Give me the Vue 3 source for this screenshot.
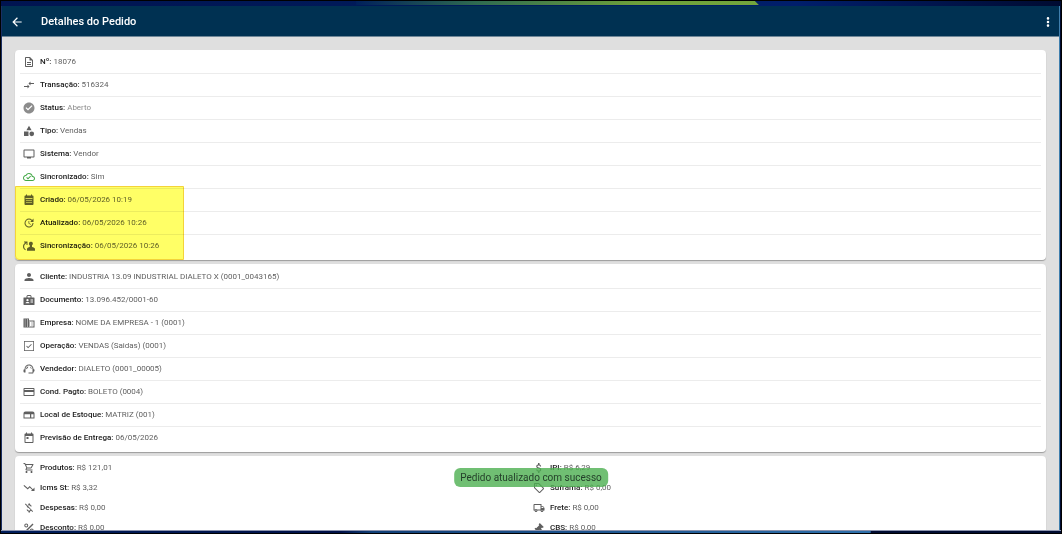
<script setup>
import { h } from 'vue'

const icons = {
  back: 'M20 11H7.83l5.59-5.59L12 4l-8 8 8 8 1.41-1.41L7.83 13H20z',
  more: 'M12 8a2.2 2.2 0 1 0 0-4.400 2.200 2.200 0 0 0 0 4.400zm0 6.200a2.200 2.200 0 1 0 0-4.400 2.200 2.200 0 0 0 0 4.400zm0 6.200a2.200 2.200 0 1 0 0-4.400 2.200 2.200 0 0 0 0 4.400z',
  document: 'M8 16h8v2H8zm0-4h8v2H8zm6-10H6c-1.100 0-2 .9-2 2v16c0 1.100.89 2 1.990 2H18c1.100 0 2-.9 2-2V8l-6-6zm4 18H6V4h7v5h5v11z',
  transfer: 'M9.010 14H2v2h7.010v3L13 15l-3.990-4v3zm5.980-1v-3H22V8h-7.010V5L11 9l3.990 4z',
  check: 'M12 1C5.930 1 1 5.930 1 12s4.930 11 11 11 11-4.930 11-11S18.070 1 12 1zm-2 16l-5-5 1.700-1.700L10 13.600l7.300-7.300L19 8l-9 9z',
  category: 'M12 1.500L6.800 10.500h10.400zM2 13h9v9H2zM17.500 13a4.700 4.700 0 1 0 0 9.400 4.700 4.700 0 0 0 0-9.400z',
  monitor: 'M21 3H3c-1.100 0-2 .9-2 2v12c0 1.100.9 2 2 2h5v2h8v-2h5c1.100 0 2-.9 2-2V5c0-1.100-.9-2-2-2zm0 14H3V5h18v12z',
  cloud: 'M19.350 10.040C18.670 6.590 15.640 4 12 4 9.110 4 6.600 5.640 5.350 8.040 2.340 8.360 0 10.910 0 14c0 3.310 2.690 6 6 6h13c2.760 0 5-2.240 5-5 0-2.640-2.050-4.780-4.650-4.960zM19 18H6c-2.210 0-4-1.790-4-4 0-2.050 1.530-3.760 3.560-3.970l1.070-.11.5-.95C8.080 7.140 9.940 6 12 6c2.620 0 4.880 1.860 5.390 4.430l.3 1.500 1.530.11c1.560.1 2.780 1.410 2.780 2.960 0 1.650-1.350 3-3 3zm-9-3.820l-2.090-2.090L6.500 13.500 10 17l6.010-6.010-1.410-1.410z',
  calendar: 'M19 3h-1V1h-2v2H8V1H6v2H5c-1.100 0-2 .9-2 2v15c0 1.100.9 2 2 2h14c1.100 0 2-.9 2-2V5c0-1.100-.9-2-2-2zM5 8.500h14V10H5zM9 14H7v-2h2v2zm4 0h-2v-2h2v2zm4 0h-2v-2h2v2zm-8 4H7v-2h2v2zm4 0h-2v-2h2v2zm4 0h-2v-2h2v2z',
  update: 'M21 10.120h-6.780l2.740-2.820c-2.730-2.700-7.150-2.800-9.880-.1-2.730 2.710-2.730 7.080 0 9.790s7.150 2.710 9.880 0C18.320 15.650 19 14.080 19 12.100h2c0 1.980-.88 4.550-2.640 6.290-3.510 3.480-9.210 3.480-12.720 0-3.500-3.470-3.530-9.110-.02-12.580s9.140-3.470 12.650 0L21 3v7.120zM12.500 8v4.250l3.500 2.080-.72 1.210L11 13V8h1.500z',
  syncUser: 'M9 3H2v2h2.600C1.800 7.400 0 9.700 0 13c0 3.400 1.900 6 4.600 7.600l1.200-1.700C3.700 17.700 2.300 15.600 2.300 13c0-2.500 1.300-4.600 4.700-7v4h2zM15.500 3.500a3.800 3.800 0 0 0-2 7V14c-3 .6-5.500 2-5.500 4v3.500h16V18c0-2.300-3-3.600-6-4v-3.500a3.800 3.800 0 0 0-2.500-7z',
  person: 'M12 12c2.210 0 4-1.790 4-4s-1.790-4-4-4-4 1.790-4 4 1.790 4 4 4zm0 2c-3 0-9 1.340-9 4v2h18v-2c0-2.660-6-4-9-4z',
  badge: 'M9 2h6l2 2v3h5c.7 0 1 .4 1 1v13c0 .7-.4 1-1 1H2c-.7 0-1-.4-1-1V8c0-.7.4-1 1-1h5V4zM9 4v3h6V4zM9 10a2.300 2.300 0 1 0 0 4.600A2.300 2.300 0 0 0 9 10zM5 18.500h8c0-3.600-8-3.600-8 0zM15 11v2h5v-2zm0 4v2h5v-2z',
  building: 'M12 7V3H1v18h22V7H12zM5 19H3.500v-2H5v2zm0-4H3.500v-2H5v2zm0-4H3.500V9H5v2zm0-4H3.500V5H5v2zm5 12H8v-2h2v2zm0-4H8v-2h2v2zm0-4H8V9h2v2zm0-4H8V5h2v2zm11 12h-9v-2h2v-2h-2v-2h2v-2h-2V9h9v10zm-2-8h-2v2h2v-2zm0 4h-2v2h2v-2z',
  checkbox: 'M2 2h20v20H2zM3.500 3.500v17h17v-17zM10.200 16.500L6.400 12.700l1.300-1.300 2.500 2.500 6.100-6.100 1.300 1.300z',
  agent: 'M21 12.200C21 6.700 16.700 3 12 3c-4.700 0-9 3.600-9 9.300-.6.300-2 .9-2 1.700v3c0 1.100.9 2 2 2h2v-7c0-4 3.100-7 7-7s7 3 7 7v7h-8v2h8c1.100 0 2-.9 2-2v-1.200c.6-.3 2-.8 2-1.600V14c0-.8-1.400-1.500-2-1.800zM14 7l3 3v2c-1.500-1.500-3-3-3-5zM10.500 7c-.3 2.500-2 4.500-4.300 5.500C6 9.500 8 7.500 10.500 7z',
  card: 'M21 4H3c-1.110 0-2 .89-2 2v12c0 1.110.89 2 2 2h18c1.110 0 2-.89 2-2V6c0-1.110-.89-2-2-2zm0 14H3v-6h18v6zm0-10H3V6h18v2z',
  store: 'M5 5h14c2.500 0 4 1.500 4 4v10H1V9c0-2.500 1.500-4 4-4zM3 10.500V17h11v-6.500zM16.500 10.500V17H21v-6.500z',
  event: 'M19 3h-1V1h-2v2H8V1H6v2H5c-1.110 0-2 .9-2 2v15c0 1.100.89 2 2 2h14c1.100 0 2-.9 2-2V5c0-1.100-.9-2-2-2zm0 17H5V8h14v12zM7 10h4v4H7z',
  cart: 'M15.550 13c.75 0 1.410-.41 1.750-1.030l3.580-6.490c.37-.66-.11-1.480-.87-1.480H5.210l-.94-2H1v2h2l3.600 7.590-1.350 2.440C4.520 15.370 5.480 17 7 17h12v-2H7l1.100-2h7.450zM6.160 6h12.150l-2.760 5H8.530L6.160 6zM7 18c-1.100 0-1.990.9-1.990 2S5.900 22 7 22s2-.9 2-2-.9-2-2-2zm10 0c-1.100 0-1.990.9-1.990 2s.89 2 1.990 2 2-.9 2-2-.9-2-2-2z',
  down: 'M16 18l2.290-2.290-4.880-4.880-4 4L1 7.410 2.410 6l7 6 4-4 6.300 6.290L23 11v7z',
  dollar: 'M11.800 10.900c-2.270-.59-3-1.200-3-2.150 0-1.090 1.010-1.850 2.700-1.850 1.780 0 2.440.85 2.500 2.100h2.210c-.07-1.720-1.120-3.300-3.210-3.810V2h-3v3.160c-1.940.42-3.500 1.680-3.500 3.610 0 2.310 1.910 3.460 4.700 4.130 2.500.6 3 1.480 3 2.410 0 .69-.49 1.790-2.700 1.790-2.060 0-2.870-.92-2.980-2.100h-2.200c.12 2.190 1.760 3.420 3.680 3.830V22h3v-3.150c1.950-.37 3.500-1.500 3.500-3.550 0-2.840-2.430-3.810-4.700-4.400z',
  noMoney: 'M12.500 6.900c1.780 0 2.440.85 2.500 2.100h2.210c-.07-1.720-1.120-3.300-3.210-3.810V3h-3v2.160c-.53.12-1.030.3-1.480.54l1.470 1.470c.41-.17.91-.27 1.510-.27zM5.330 3.060L3.920 4.470 7.500 8.050c0 2.080 1.560 3.210 3.910 3.910l3.510 3.510c-.34.48-1.050 1.630-2.420 1.630-2.060 0-2.870-.92-2.980-2.100h-2.200c.12 2.190 1.760 3.420 3.680 3.830V21h3v-2.150c.96-.18 1.820-.55 2.450-1.120l2.220 2.220 1.410-1.410z',
  percent: 'M6.500 3a4 4 0 1 0 0 8 4 4 0 0 0 0-8zm0 2a2 2 0 1 1 0 4 2 2 0 0 1 0-4zM19 3l2 2L5 21l-2-2zM17.500 13a4 4 0 1 0 0 8 4 4 0 0 0 0-8zm0 2a2 2 0 1 1 0 4 2 2 0 0 1 0-4z',
  tag: 'M21.410 11.580l-9-9C12.050 2.220 11.550 2 11 2H4c-1.100 0-2 .9-2 2v7c0 .55.22 1.050.59 1.420l9 9c.36.36.86.58 1.410.58s1.050-.22 1.410-.59l7-7c.37-.36.59-.86.59-1.410s-.23-1.060-.59-1.420zM13 20.010L4 11V4h7v-.01l9 9-7 7.020zM6.500 5a1.500 1.500 0 1 0 0 3 1.500 1.500 0 0 0 0-3z',
  truck: 'M20 8h-3V4H3c-1.100 0-2 .9-2 2v11h2c0 1.660 1.340 3 3 3s3-1.340 3-3h6c0 1.660 1.340 3 3 3s3-1.340 3-3h2v-5l-3-4zm-.5 1.500l1.960 2.500H17V9.500h2.500zM6 18c-.55 0-1-.45-1-1s.45-1 1-1 1 .45 1 1-.45 1-1 1zm2.220-3c-.55-.61-1.330-1-2.220-1s-1.670.39-2.220 1H3V6h12v9H8.220zM18 18c-.55 0-1-.45-1-1s.45-1 1-1 1 .45 1 1-.45 1-1 1z',
  gavel: 'M13.500 2l8 8-2.200 2.200-1.200-1.200-2.300 2.300 6.200 6.200-2.200 2.200-6.200-6.200-2.100 2.100 1.200 1.200L10.500 21 3 13.500l2.200-2.200 1.200 1.200 6.100-6.100L11.300 5.200z',
}

const Icon = (props) =>
  h('svg', { viewBox: '0 0 24 24', class: 'icon', 'aria-hidden': 'true' }, [
    h('path', { d: icons[props.name], 'fill-rule': 'evenodd' }),
  ])
Icon.props = ['name']

const order = [
  { icon: 'document', label: 'Nº', value: '18076' },
  { icon: 'transfer', label: 'Transação', value: '516324' },
  { icon: 'check', label: 'Status', value: 'Aberto', tone: 'muted' },
  { icon: 'category', label: 'Tipo', value: 'Vendas' },
  { icon: 'monitor', label: 'Sistema', value: 'Vendor' },
  { icon: 'cloud', label: 'Sincronizado', value: 'Sim', tone: 'synced' },
  { icon: 'calendar', label: 'Criado', value: '06/05/2026 10:19' },
  { icon: 'update', label: 'Atualizado', value: '06/05/2026 10:26' },
  { icon: 'syncUser', label: 'Sincronização', value: '06/05/2026 10:26' },
]

const customer = [
  { icon: 'person', label: 'Cliente', value: 'INDUSTRIA 13.09 INDUSTRIAL DIALETO X (0001_0043165)' },
  { icon: 'badge', label: 'Documento', value: '13.096.452/0001-60' },
  { icon: 'building', label: 'Empresa', value: 'NOME DA EMPRESA - 1 (0001)' },
  { icon: 'checkbox', label: 'Operação', value: 'VENDAS (Saidas) (0001)' },
  { icon: 'agent', label: 'Vendedor', value: 'DIALETO (0001_00005)' },
  { icon: 'card', label: 'Cond. Pagto', value: 'BOLETO (0004)' },
  { icon: 'store', label: 'Local de Estoque', value: 'MATRIZ (001)' },
  { icon: 'event', label: 'Previsão de Entrega', value: '06/05/2026' },
]

const totals = [
  { icon: 'cart', label: 'Produtos', value: 'R$ 121,01' },
  { icon: 'dollar', label: 'IPI', value: 'R$ 6,29' },
  { icon: 'down', label: 'Icms St', value: 'R$ 3,32' },
  { icon: 'tag', label: 'Suframa', value: 'R$ 0,00' },
  { icon: 'noMoney', label: 'Despesas', value: 'R$ 0,00' },
  { icon: 'truck', label: 'Frete', value: 'R$ 0,00' },
  { icon: 'percent', label: 'Desconto', value: 'R$ 0,00' },
  { icon: 'gavel', label: 'CBS', value: 'R$ 0,00' },
]
</script>

<template>
  <div class="desktop">
    <div class="top-strip"><span class="top-accent"></span></div>
    <div class="window">
      <header class="app-bar">
        <button type="button" class="bar-button" aria-label="Voltar"><Icon name="back" /></button>
        <h1 class="title">Detalhes do Pedido</h1>
        <button type="button" class="bar-button" aria-label="Mais opções"><Icon name="more" /></button>
      </header>
      <main class="content">
        <section class="card">
          <ul class="rows">
            <li v-for="item in order" :key="item.label" class="row" :class="item.tone">
              <Icon :name="item.icon" />
              <span><strong>{{ item.label }}:</strong> {{ item.value }}</span>
            </li>
          </ul>
          <div class="highlight"></div>
        </section>
        <section class="card">
          <ul class="rows customer">
            <li v-for="item in customer" :key="item.label" class="row">
              <Icon :name="item.icon" />
              <span><strong>{{ item.label }}:</strong> {{ item.value }}</span>
            </li>
          </ul>
        </section>
        <section class="card">
          <ul class="totals">
            <li v-for="item in totals" :key="item.label" class="total">
              <Icon :name="item.icon" />
              <span><strong>{{ item.label }}:</strong> {{ item.value }}</span>
            </li>
          </ul>
        </section>
      </main>
    </div>
    <div class="bottom-strip"></div>
    <div class="toast" role="status">Pedido atualizado com sucesso</div>
  </div>
</template>

<style>
body {
  margin: 0;
  background: #000;
}
</style>

<style scoped>
.desktop {
  position: relative;
  box-sizing: border-box;
  display: flex;
  flex-direction: column;
  height: 100vh;
  border: 1px solid #000;
  background: #000b31;
  font-family: Roboto, "Liberation Sans", sans-serif;
}
.top-strip {
  flex: none;
  height: 5px;
  background: linear-gradient(90deg, #001451 0%, #001c5c 50%, #001e6b 75%, #000b31 100%);
}
.top-accent {
  display: block;
  width: 38%;
  height: 4px;
  margin-left: 33.500%;
  background: linear-gradient(90deg, #00205b, #2f6b50 30%, #6ea03a 70%, #73a53c);
  clip-path: polygon(0 0, 99% 0, 100% 100%, 0 100%);
}
.window {
  flex: 1;
  min-height: 0;
  display: flex;
  flex-direction: column;
  margin-right: 1px;
  border-left: 1px solid #1b2f63;
  border-right: 1px solid #3f7fae;
  background: #dfdfdf;
}
.app-bar {
  flex: none;
  display: flex;
  align-items: center;
  height: 28px;
  padding: 2px 4px 0 8px;
  background: #003152;
  border-bottom: 1px solid #6f8798;
  color: #fff;
}
.bar-button {
  display: flex;
  padding: 0;
  border: 0;
  background: none;
  color: inherit;
}
.title {
  flex: 1;
  margin: 0 0 0 17px;
  font-size: 11px;
  line-height: 16px;
  font-weight: 500;
}
.icon {
  flex: none;
  width: 12px;
  height: 12px;
  fill: currentColor;
}
.bar-button .icon {
  width: 14px;
  height: 14px;
}
.content {
  flex: 1;
  min-height: 0;
  overflow: hidden;
  display: flex;
  flex-direction: column;
  gap: 4px;
  padding: 13px 13px 0;
}
.card {
  position: relative;
  flex: none;
  border-radius: 4px;
  background: #fff;
  box-shadow: 0 1px 1px rgba(0, 0, 0, 0.3);
}
.rows,
.totals {
  margin: 0;
  list-style: none;
  font-size: 8px;
  line-height: 12px;
  color: #5f5f5f;
}
.rows {
  padding: 1px 5px 3px;
}
.customer {
  padding-top: 2px;
}
.row {
  display: flex;
  align-items: center;
  gap: 5px;
  height: 22px;
  padding: 0 3px;
}
.row + .row {
  border-top: 1px solid #ececec;
}
.row strong,
.total strong {
  font-weight: 500;
  color: #212121;
}
.muted {
  color: #8c8c8c;
}
.synced .icon {
  color: #43a847;
}
.highlight {
  position: absolute;
  left: 0;
  bottom: 0;
  box-sizing: border-box;
  width: 169px;
  height: 74px;
  border: 1px solid #f3d33a;
  border-radius: 0 0 0 4px;
  background: #ffff66;
  mix-blend-mode: multiply;
}
.totals {
  display: grid;
  grid-template-columns: 1fr 1fr;
  padding: 2px 3px 8px 8px;
}
.total {
  display: flex;
  align-items: center;
  gap: 5px;
  height: 20px;
}
.bottom-strip {
  flex: none;
  height: 2px;
  border-top: 1px solid #8b93ad;
  background: linear-gradient(90deg, #001d5a 0%, #001047 32%, #113f77 35%, #2f70ab 82%, #000b31 82.100%);
}
.toast {
  position: absolute;
  left: 50%;
  bottom: 46px;
  transform: translateX(-50%);
  padding: 2px 6px;
  border-radius: 6px;
  background: rgba(76, 175, 80, 0.8);
  color: #24402a;
  font-size: 10px;
  line-height: 15px;
  white-space: nowrap;
}
</style>
